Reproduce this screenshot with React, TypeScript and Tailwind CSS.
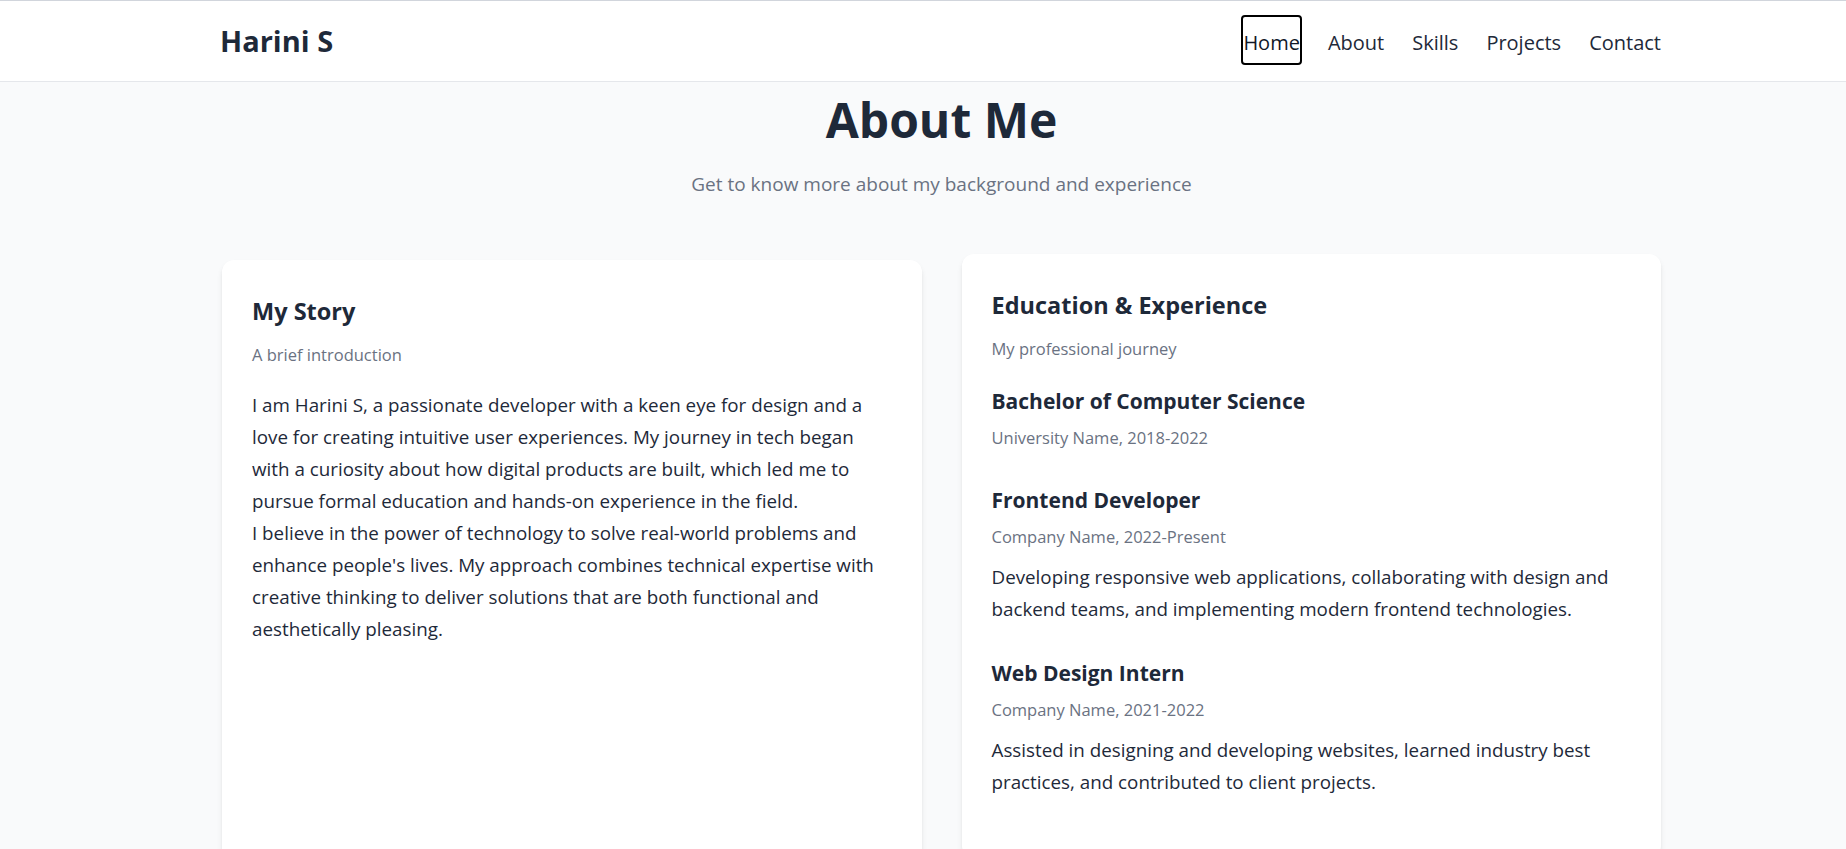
import React from 'react';

// Items in the Education & Experience card
interface TimelineItem {
  title: string;
  meta: string;
  description?: string;
  spacing: string;
}

const timeline: TimelineItem[] = [
  {
    title: 'Bachelor of Computer Science',
    meta: 'University Name, 2018-2022',
    spacing: 'mt-[26px]',
  },
  {
    title: 'Frontend Developer',
    meta: 'Company Name, 2022-Present',
    description:
      'Developing responsive web applications, collaborating with design and backend teams, and implementing modern frontend technologies.',
    spacing: 'mt-[36px]',
  },
  {
    title: 'Web Design Intern',
    meta: 'Company Name, 2021-2022',
    description:
      'Assisted in designing and developing websites, learned industry best practices, and contributed to client projects.',
    spacing: 'mt-[34px]',
  },
];

const navLinks = ['Home', 'About', 'Skills', 'Projects', 'Contact'];

function Header() {
  return (
    <header className="bg-white border-t border-t-gray-300 border-b border-b-gray-200">
      <div className="h-20 flex items-center justify-between pl-[220px] pr-[183px]">
        <span className="text-[29px] leading-9 font-bold text-gray-800">Harini S</span>
        <nav className="flex items-center gap-6 mb-[2px]">
          {navLinks.map((link) => (
            <button
              key={link}
              className={
                link === 'Home'
                  ? 'border-2 border-black rounded-[4px] px-0 pt-[15px] pb-[10px] text-[20px] leading-[21px] font-normal text-gray-900'
                  : 'border-2 border-transparent rounded-[4px] px-0 pt-[15px] pb-[10px] text-[20px] leading-[21px] font-medium text-gray-800'
              }
            >
              {link}
            </button>
          ))}
        </nav>
      </div>
    </header>
  );
}

function CardHeading({ title, subtitle }: { title: string; subtitle: string }) {
  return (
    <>
      <h3 className="text-[23.5px] leading-8 font-bold text-gray-800">{title}</h3>
      <p className="mt-4 text-[16.5px] leading-6 text-gray-500">{subtitle}</p>
    </>
  );
}

export default function App() {
  return (
    <div className="min-h-screen bg-gray-50 font-['Open_Sans',sans-serif]">
      <Header />

      <main className="pl-[222px] pr-[185px] pb-16">
        <h1 className="mt-[14px] text-center text-5xl leading-none font-bold text-gray-800">About Me</h1>
        <p className="mt-[26px] text-center text-[19px] leading-7 text-gray-500">
          Get to know more about my background and experience
        </p>

        <div className="mt-[62px] grid grid-cols-2 gap-10">
          {/* My Story */}
          <div className="bg-white rounded-xl shadow-md px-[30px] pt-[35px] pb-[60px]">
            <CardHeading title="My Story" subtitle="A brief introduction" />
            <div className="mt-[22px] text-[18.8px] leading-8 text-gray-800">
              <p>
                I am Harini S, a passionate developer with a keen eye for design and a love for creating
                intuitive user experiences. My journey in tech began with a curiosity about how digital
                products are built, which led me to pursue formal education and hands-on experience in the
                field.
              </p>
              <p>
                I believe in the power of technology to solve real-world problems and enhance people's lives.
                My approach combines technical expertise with creative thinking to deliver solutions that are
                both functional and aesthetically pleasing.
              </p>
            </div>
          </div>

          {/* Education & Experience */}
          <div className="bg-white rounded-xl shadow-md px-[30px] pt-[35px] pb-[60px] -translate-y-1.5">
            <CardHeading title="Education & Experience" subtitle="My professional journey" />
            {timeline.map((item) => (
              <div key={item.title} className={item.spacing}>
                <h4 className="text-[21px] leading-7 font-bold text-gray-800">{item.title}</h4>
                <p className="mt-[11px] text-[16.5px] leading-6 text-gray-500">{item.meta}</p>
                {item.description && (
                  <p className="mt-3 text-[18.8px] leading-8 text-gray-800">{item.description}</p>
                )}
              </div>
            ))}
          </div>
        </div>
      </main>
    </div>
  );
}
